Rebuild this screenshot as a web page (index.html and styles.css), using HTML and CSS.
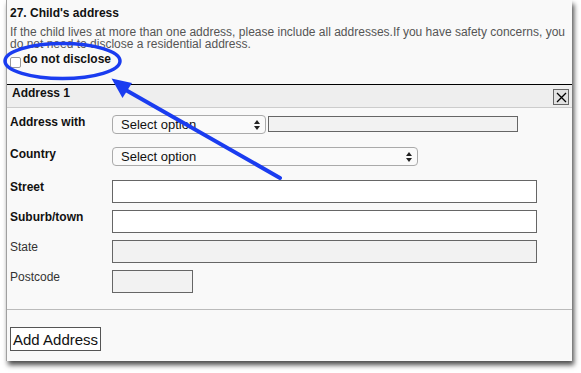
FILE: index.html
```html
<!DOCTYPE html>
<html lang="en">
<head>
    <meta charset="UTF-8">
    <title>Child's address</title>
    <link rel="stylesheet" href="styles.css">
</head>
<body>
<div class="page">
    <div class="panel">
        <div class="question">
            <h3 class="q-title">27. Child's address</h3>
            <p class="q-help">If the child lives at more than one address, please include all addresses.If you have safety concerns, you do not need to disclose a residential address.</p>
            <label class="no-disclose"><input type="checkbox" class="check">do not disclose</label>
        </div>

        <div class="address">
            <div class="addr-head">
                <span class="addr-title">Address 1</span>
                <span class="close">
                    <svg width="11" height="11" viewBox="0 0 11 11"><path d="M1 1L10 10M10 1L1 10" stroke="#000" stroke-width="1.3"/></svg>
                </span>
            </div>
            <div class="addr-body">
                <div class="row pick1">
                    <span class="row-label">Address with</span>
                    <div class="select sel-short">
                        <span>Select option</span>
                        <svg class="arrows" width="6" height="10" viewBox="0 0 6 10"><path d="M3 0L6 4H0Z M0 6H6L3 10Z" fill="#222"/></svg>
                    </div>
                    <input type="text" class="field field-other" disabled>
                </div>
                <div class="row pick2">
                    <span class="row-label">Country</span>
                    <div class="select sel-long">
                        <span>Select option</span>
                        <svg class="arrows" width="6" height="10" viewBox="0 0 6 10"><path d="M3 0L6 4H0Z M0 6H6L3 10Z" fill="#222"/></svg>
                    </div>
                </div>
                <div class="row">
                    <span class="row-label">Street</span>
                    <input type="text" class="field field-wide">
                </div>
                <div class="row">
                    <span class="row-label">Suburb/town</span>
                    <input type="text" class="field field-wide">
                </div>
                <div class="row">
                    <span class="row-label light">State</span>
                    <input type="text" class="field field-wide" disabled>
                </div>
                <div class="row">
                    <span class="row-label light">Postcode</span>
                    <input type="text" class="field field-post" disabled>
                </div>
            </div>
        </div>

        <div class="footer">
            <button type="button" class="add-btn">Add Address</button>
        </div>
    </div>

    <!-- callout drawn over the form -->
    <svg class="annot" width="581" height="373" viewBox="0 0 581 373">
        <ellipse cx="62.5" cy="61" rx="57.5" ry="17.5" fill="none" stroke="#1a3cf0" stroke-width="3.5"/>
        <line x1="280" y1="178" x2="124" y2="89" stroke="#1a3cf0" stroke-width="4" stroke-linecap="round"/>
        <polygon points="111.5,78.5 132,83 122.5,98" fill="#1a3cf0"/>
    </svg>
</div>
</body>
</html>
```

FILE: styles.css
```css
* { box-sizing: border-box; }
body { margin: 0; background: #fff; font-family: "Liberation Sans", Arial, sans-serif; font-size: 12px; color: #111; }
.page { position: relative; width: 581px; height: 373px; }
.panel { margin-left: 6px; width: 566px; height: 361px; background: #f9f9f9; border-left: 1px solid #a0a0a0; box-shadow: 2px 4px 5px rgba(0, 0, 0, .7); }

.question { height: 84px; padding: 6px 0 0 3px; }
.q-title { margin: 0; font-size: 12px; line-height: 14px; font-weight: bold; }
.q-help { margin: 6px 0 0; width: 560px; line-height: 12px; color: #555; }
.no-disclose { display: flex; align-items: flex-start; margin-top: 2px; line-height: 14px; font-weight: bold; }
.check { appearance: none; width: 11px; height: 11px; margin: 5px 2px 0 0; background: #fff; border: 1px solid #999; border-radius: 2px; }

.address { border-top: 1px solid #000; border-bottom: 1px solid #bbb; }
.addr-head { display: flex; justify-content: space-between; align-items: flex-start; height: 23px; padding: 0 3px 0 5px; background: #eee; border-bottom: 1px solid #ccc; font-weight: bold; }
.addr-title { margin-top: 1px; line-height: 14px; }
.close { display: flex; align-items: center; justify-content: center; width: 16px; height: 16px; margin-top: 4px; background: #e2e2e2; border: 1px solid #666; }

.addr-body { padding: 7px 0 9px 3px; }
.row { display: flex; align-items: flex-start; margin-bottom: 7px; }
.row.pick1 { margin-bottom: 13px; }
.row.pick2 { margin-bottom: 14px; }
.row-label { flex: none; width: 102px; line-height: 14px; font-weight: bold; }
.row-label.light { font-weight: normal; color: #333; }

.select { display: flex; justify-content: space-between; align-items: center; height: 19px; padding: 0 5px 0 8px; background: #fafafa; border: 1px solid #aaa; border-radius: 4px; font-size: 13px; color: #111; }
.sel-short { width: 154px; }
.sel-long { width: 306px; }

.field { height: 23px; margin: 0; padding: 0 3px; background: #fff; border: 1px solid #666; font: inherit; }
.field:disabled { background: #f2f2f2; }
.field-wide { width: 425px; }
.field-post { width: 81px; }
.field-other { width: 250px; height: 16px; margin: 1px 0 0 2px; background: #f0f0f0; }

.footer { padding: 17px 0 0 3px; }
.add-btn { height: 24px; padding: 0 2px; background: #fff; border: 1px solid #555; font-family: inherit; font-size: 15px; color: #111; white-space: nowrap; }

.annot { position: absolute; top: 0; left: 0; pointer-events: none; }
```
